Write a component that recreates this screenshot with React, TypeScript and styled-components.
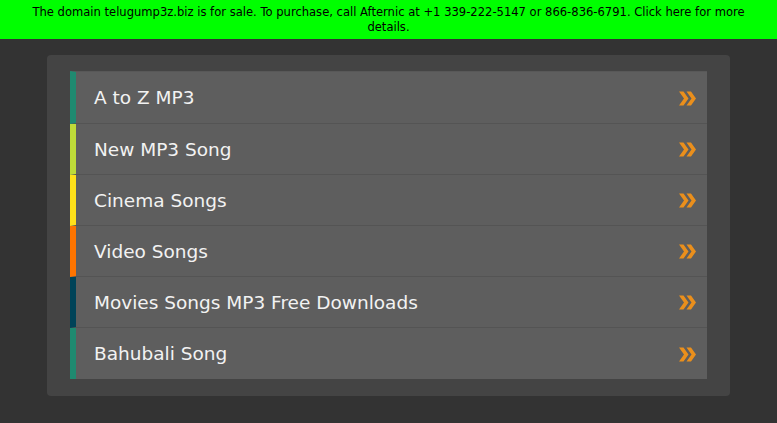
import styled, { createGlobalStyle } from "styled-components";

const GlobalStyle = createGlobalStyle`
  html, body {
    margin: 0;
    padding: 0;
    background: #333333;
    font-family: "DejaVu Sans", sans-serif;
  }
`;

const SaleBanner = styled.div`
  background: #00ff00;
  color: #000;
  font-size: 11.55px;
  line-height: 15px;
  text-align: center;
  padding: 5px 24px 4px;
  height: 30px;
`;

const Page = styled.div`
  padding: 16px 47px 28px;
`;

const Panel = styled.div`
  background: #444444;
  border-radius: 4px;
  padding: 16px 23px 17px;
`;

const LinkList = styled.ul`
  list-style: none;
  margin: 0;
  padding: 0;
`;

const LinkRow = styled.li<{ $accent: string }>`
  display: flex;
  align-items: center;
  justify-content: space-between;
  height: 50px;
  background: #5e5e5e;
  border-left: 6px solid ${(p) => p.$accent};
  border-bottom: 1px solid #545454;
  padding: 0 10px 0 18px;
  color: #f2f2f2;
  font-size: 18.5px;

  &:first-child {
    border-top: 1px solid #585858;
    height: 51px;
  }
  &:last-child {
    border-bottom: none;
    height: 51px;
  }
`;

const Arrow = styled.svg`
  width: 19px;
  height: 17px;
  margin-top: 1px;
`;

function DoubleChevron() {
  return (
    <Arrow viewBox="0 0 19 17">
      <path d="M1 1.5h4.5l5 7-5 7H1l5-7z" fill="#ea8f1c" />
      <path d="M8.5 1.5H13l5 7-5 7H8.5l5-7z" fill="#ea8f1c" />
    </Arrow>
  );
}

const links = [
  { label: "A to Z MP3", accent: "#1f8a70" },
  { label: "New MP3 Song", accent: "#bedb39" },
  { label: "Cinema Songs", accent: "#ffe11a" },
  { label: "Video Songs", accent: "#fd7400" },
  { label: "Movies Songs MP3 Free Downloads", accent: "#004358" },
  { label: "Bahubali Song", accent: "#1f8a70" },
];

export default function App() {
  return (
    <>
      <GlobalStyle />
      <SaleBanner>
        The domain telugump3z.biz is for sale. To purchase, call Afternic at +1
        339-222-5147 or 866-836-6791. Click here for more details.
      </SaleBanner>
      <Page>
        <Panel>
          <LinkList>
            {links.map(({ label, accent }) => (
              <LinkRow key={label} $accent={accent}>
                {label}
                <DoubleChevron />
              </LinkRow>
            ))}
          </LinkList>
        </Panel>
      </Page>
    </>
  );
}
